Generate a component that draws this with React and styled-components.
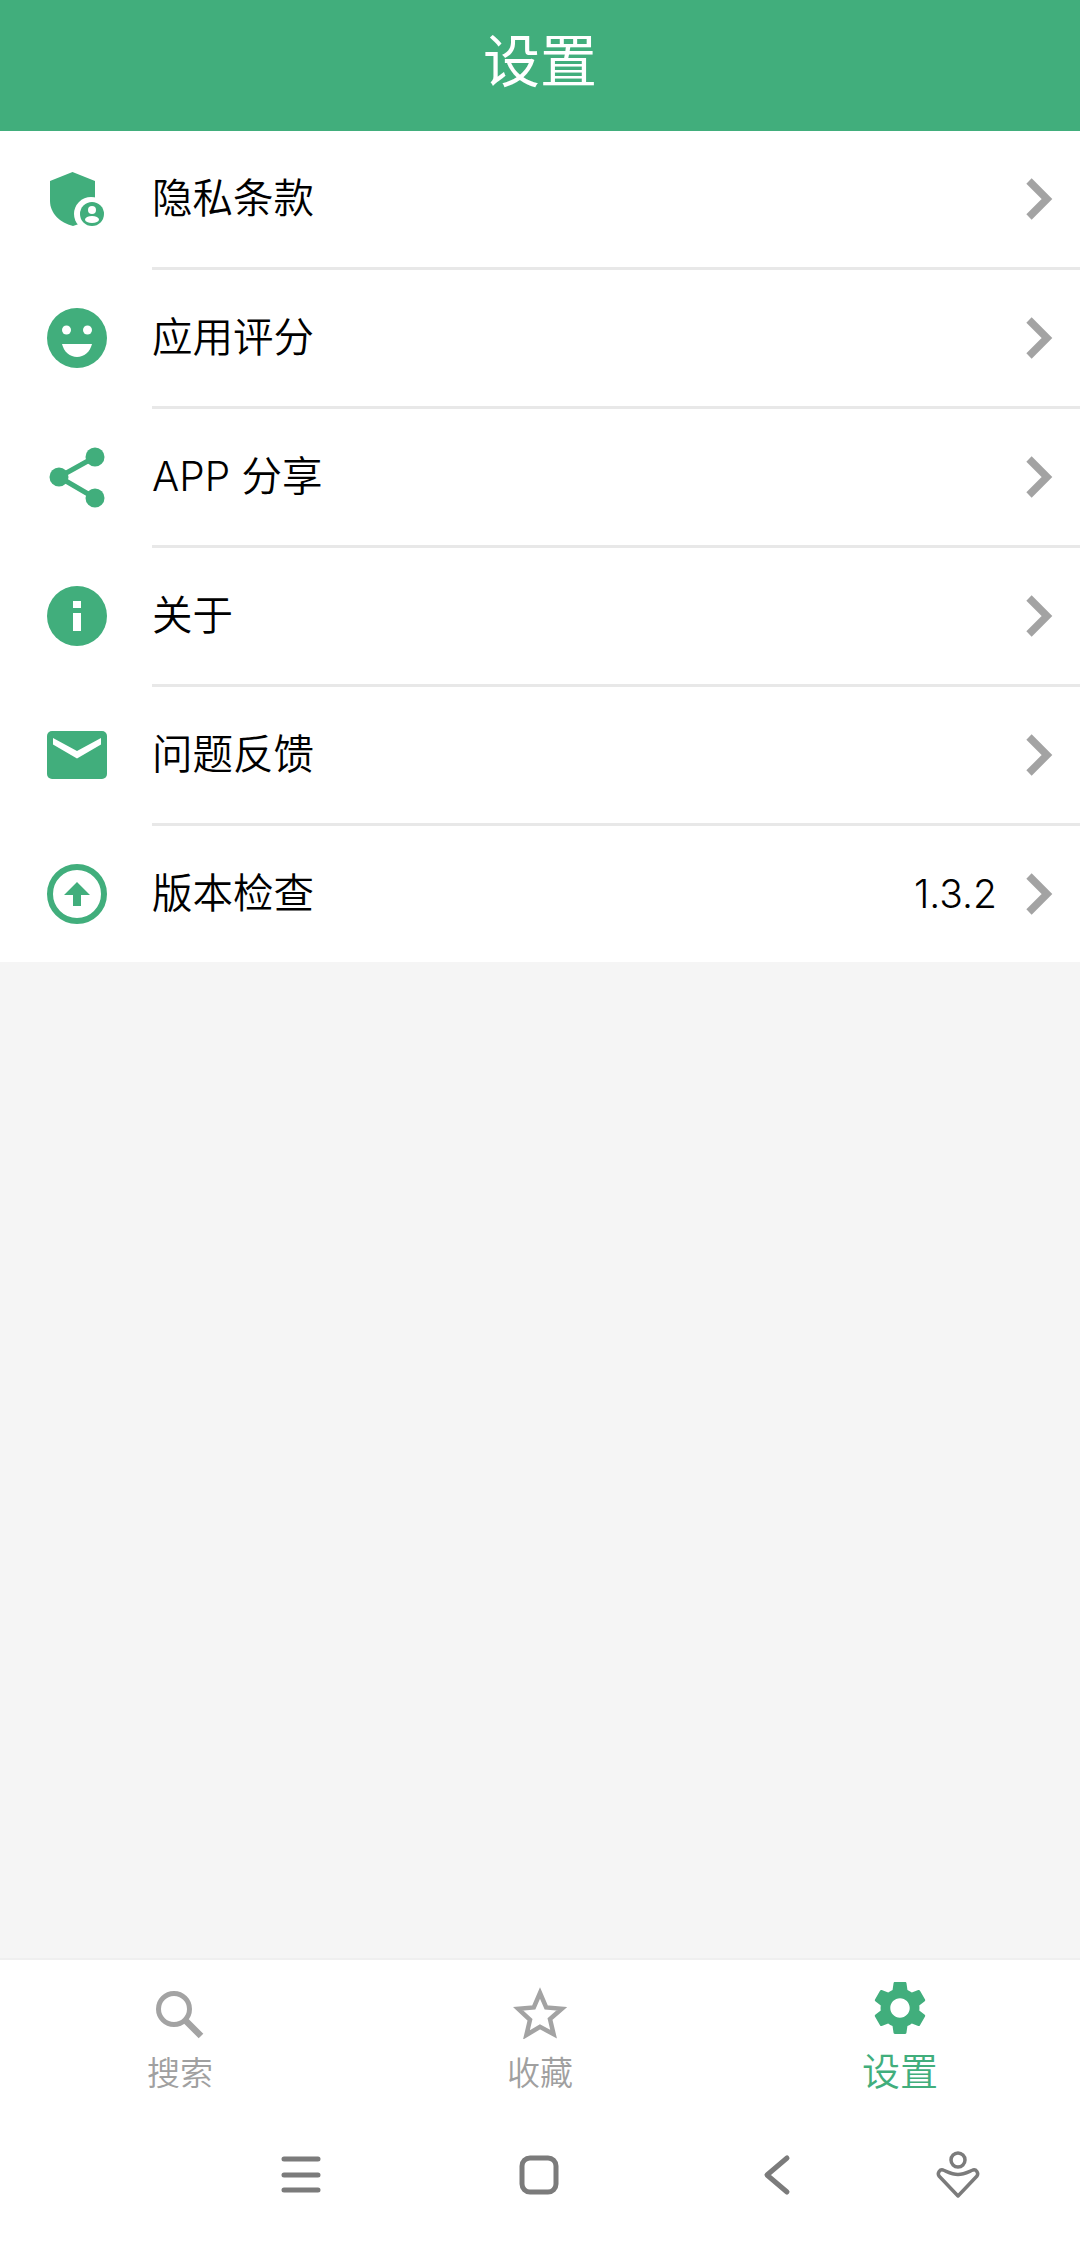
import styled, { createGlobalStyle } from "styled-components";

const GREEN = "#41ae7c";

const GlobalStyle = createGlobalStyle`
  html, body {
    margin: 0;
    padding: 0;
    background: #f5f5f5;
  }
  * {
    box-sizing: border-box;
  }
`;

const Page = styled.div`
  display: flex;
  flex-direction: column;
  height: 2243px;
  font-family: Inter, "Noto Sans CJK SC", sans-serif;
  color: #000;
`;

const Header = styled.header`
  display: flex;
  align-items: center;
  justify-content: center;
  height: 131px;
  padding-bottom: 18px;
  background: ${GREEN};
  color: #fff;
  font-size: 57px;
`;

const List = styled.ul`
  list-style: none;
  margin: 0;
  padding: 0;
  background: #fff;
`;

const Row = styled.li`
  display: flex;
  align-items: center;
  height: 136px;
  padding: 0 26px 0 47px;
`;

const Divider = styled.div`
  height: 3px;
  margin-left: 152px;
  background: #e8e8e8;
`;

const RowIcon = styled.svg`
  flex: none;
  width: 60px;
  height: 60px;
  overflow: visible;
  fill: ${GREEN};
`;

const RowLabel = styled.span`
  flex: 1;
  margin-left: 45px;
  font-size: 40.5px;
  font-weight: 350;
  line-height: 56px;
`;

const RowValue = styled.span`
  margin-right: 29px;
  font-size: 39px;
  font-weight: 350;
  line-height: 56px;
`;

const Chevron = styled.svg`
  flex: none;
  width: 28px;
  height: 42px;
  fill: none;
  stroke: #a3a3a3;
  stroke-width: 7.5;
`;

const Spacer = styled.main`
  flex: 1;
  background: #f5f5f5;
`;

const TabBar = styled.nav`
  display: grid;
  grid-template-columns: repeat(3, 1fr);
  height: 142px;
  padding-top: 23px;
  background: #fff;
  border-top: 2px solid #efefef;
`;

const Tab = styled.div`
  display: flex;
  flex-direction: column;
  align-items: center;
`;

const TabIconSlot = styled.div`
  display: flex;
  align-items: flex-end;
  justify-content: center;
  height: 56px;
  padding-bottom: ${(p) => p.$lift || 0}px;
`;

const TabLabel = styled.span`
  margin-top: ${(p) => (p.$active ? "12px" : "14px")};
  font-size: ${(p) => (p.$active ? "38px" : "33px")};
  font-weight: 350;
  line-height: 40px;
  color: ${(p) => (p.$active ? GREEN : "#a0a0a0")};
`;

const SystemBar = styled.div`
  flex: none;
  display: flex;
  height: 143px;
  padding: 50px 0 0 182px;
  background: #fff;
`;

const SystemSlot = styled.div`
  display: flex;
  align-items: center;
  justify-content: center;
  width: ${(p) => p.$width}px;
  height: 50px;
`;

const SystemIcon = styled.svg`
  fill: none;
  stroke: #7b7b7b;
  stroke-width: 5;
  stroke-linecap: round;
  stroke-linejoin: round;
  overflow: visible;
`;

const ShieldIcon = () => (
  <RowIcon viewBox="0 0 60 60">
    <path d="M25.500 3 48 12v20c0 12-10 22-22 25C13 54 3 44 3 32V12z" />
    <circle cx="44" cy="45" r="17" fill="#fff" />
    <circle cx="45" cy="45" r="12" />
    <circle cx="45" cy="41" r="4" fill="#fff" />
    <ellipse cx="45" cy="50.500" rx="7" ry="3.600" fill="#fff" />
  </RowIcon>
);

const SmileIcon = () => (
  <RowIcon viewBox="0 0 60 60">
    <circle cx="30" cy="30" r="30" />
    <circle cx="19.500" cy="22" r="4.500" fill="#fff" />
    <circle cx="40.500" cy="22" r="4.500" fill="#fff" />
    <path d="M15 36h30c-2 8-8 13-15 13s-13-5-15-13z" fill="#fff" />
  </RowIcon>
);

const ShareIcon = () => (
  <RowIcon viewBox="0 0 60 60">
    <path d="M48 10 12 30l36 21" fill="none" stroke={GREEN} strokeWidth="5" />
    <circle cx="48" cy="10" r="9.500" />
    <circle cx="12" cy="30" r="9.500" />
    <circle cx="48" cy="51" r="9.500" />
  </RowIcon>
);

const InfoIcon = () => (
  <RowIcon viewBox="0 0 60 60">
    <circle cx="30" cy="30" r="30" />
    <rect x="26" y="15" width="8" height="7" fill="#fff" />
    <rect x="26" y="27" width="8" height="18" fill="#fff" />
  </RowIcon>
);

const MailIcon = () => (
  <RowIcon viewBox="0 0 60 60">
    <rect x="0" y="6" width="60" height="48" rx="5" />
    <path d="M6 13 30 26 54 13v6.500L30 33.500 6 19.500z" fill="#fff" />
  </RowIcon>
);

const UpdateIcon = () => (
  <RowIcon viewBox="0 0 60 60">
    <circle cx="30" cy="30" r="27" fill="none" stroke={GREEN} strokeWidth="6" />
    <path d="M30 18 43 31h-9v11h-8V31h-9z" />
  </RowIcon>
);

const RowChevron = () => (
  <Chevron viewBox="0 0 28 42">
    <path d="M3 3l18 18L3 39" />
  </Chevron>
);

const rows = [
  { label: "隐私条款", Icon: ShieldIcon },
  { label: "应用评分", Icon: SmileIcon },
  { label: "APP 分享", Icon: ShareIcon },
  { label: "关于", Icon: InfoIcon },
  { label: "问题反馈", Icon: MailIcon },
  { label: "版本检查", Icon: UpdateIcon, value: "1.3.2" },
];

export default function App() {
  return (
    <Page>
      <GlobalStyle />
      <Header>设置</Header>
      <List>
        {rows.map(({ label, Icon, value }, index) => (
          <div key={label}>
            {index > 0 && <Divider />}
            <Row>
              <Icon />
              <RowLabel>{label}</RowLabel>
              {value && <RowValue>{value}</RowValue>}
              <RowChevron />
            </Row>
          </div>
        ))}
      </List>
      <Spacer />
      <TabBar>
        <Tab>
          <TabIconSlot>
            <svg width="48" height="48" viewBox="0 0 48 48" fill="none" stroke="#a3a3a3">
              <circle cx="18" cy="18" r="15.500" strokeWidth="5" />
              <path d="M29 29l16 16" strokeWidth="6.500" />
            </svg>
          </TabIconSlot>
          <TabLabel>搜索</TabLabel>
        </Tab>
        <Tab>
          <TabIconSlot>
            <svg width="54" height="52" viewBox="0 0 54 52" fill="none" stroke="#a3a3a3" strokeWidth="4.500">
              <path d="M27 6l6.200 14.400 15.600 1.400-11.800 10.200 3.600 15.200L27 39.800l-13.600 8.200 3.600-15.200L5.200 21.800l15.600-1.400z" />
            </svg>
          </TabIconSlot>
          <TabLabel>收藏</TabLabel>
        </Tab>
        <Tab>
          <TabIconSlot $lift={4}>
            <svg width="52" height="54" viewBox="2.500 2 19 20" fill={GREEN}>
              <path d="M19.14 12.94c.04-.3.06-.61.06-.94 0-.32-.02-.64-.07-.94l2.03-1.58c.18-.14.23-.41.12-.61l-1.92-3.32c-.12-.22-.37-.29-.59-.22l-2.39.96c-.5-.38-1.03-.7-1.62-.94l-.36-2.54c-.04-.24-.24-.41-.48-.41h-3.84c-.24 0-.43.17-.47.41l-.36 2.54c-.59.24-1.13.57-1.62.94l-2.39-.96c-.22-.08-.47 0-.59.22L2.740 8.870c-.12.21-.08.47.12.61l2.030 1.580c-.05.3-.09.63-.09.94s.02.64.07.94l-2.030 1.580c-.18.14-.23.41-.12.61l1.920 3.320c.12.22.37.29.59.22l2.390-.96c.5.38 1.030.7 1.620.94l.36 2.540c.05.24.24.41.48.41h3.840c.24 0 .44-.17.47-.41l.36-2.540c.59-.24 1.130-.56 1.620-.94l2.390.96c.22.08.47 0 .59-.22l1.920-3.320c.12-.22.07-.47-.12-.61l-2.010-1.580zM12 15.600c-1.980 0-3.600-1.620-3.600-3.600s1.620-3.600 3.600-3.600 3.600 1.620 3.600 3.600-1.620 3.600-3.600 3.600z" />
            </svg>
          </TabIconSlot>
          <TabLabel $active>设置</TabLabel>
        </Tab>
      </TabBar>
      <SystemBar>
        <SystemSlot $width={238}>
          <SystemIcon width="38" height="38" viewBox="0 0 38 38">
            <path d="M2 3h34M2 19h34M2 34h34" />
          </SystemIcon>
        </SystemSlot>
        <SystemSlot $width={238}>
          <SystemIcon width="40" height="40" viewBox="0 0 40 40">
            <rect x="3" y="3" width="34" height="34" rx="8" />
          </SystemIcon>
        </SystemSlot>
        <SystemSlot $width={238}>
          <SystemIcon width="26" height="38" viewBox="0 0 26 38">
            <path d="M23 2 3 19l20 17" />
          </SystemIcon>
        </SystemSlot>
        <SystemSlot $width={124}>
          <SystemIcon width="42" height="46" viewBox="0 0 42 46">
            <circle cx="21" cy="8" r="7" strokeWidth="3.500" />
            <path d="M6 18C11 20 15 22.500 21 22.500S31 20 36 18C39 17 42 21 40 24L21 44 2 24C0 21 3 17 6 18z" strokeWidth="3.500" />
          </SystemIcon>
        </SystemSlot>
      </SystemBar>
    </Page>
  );
}
